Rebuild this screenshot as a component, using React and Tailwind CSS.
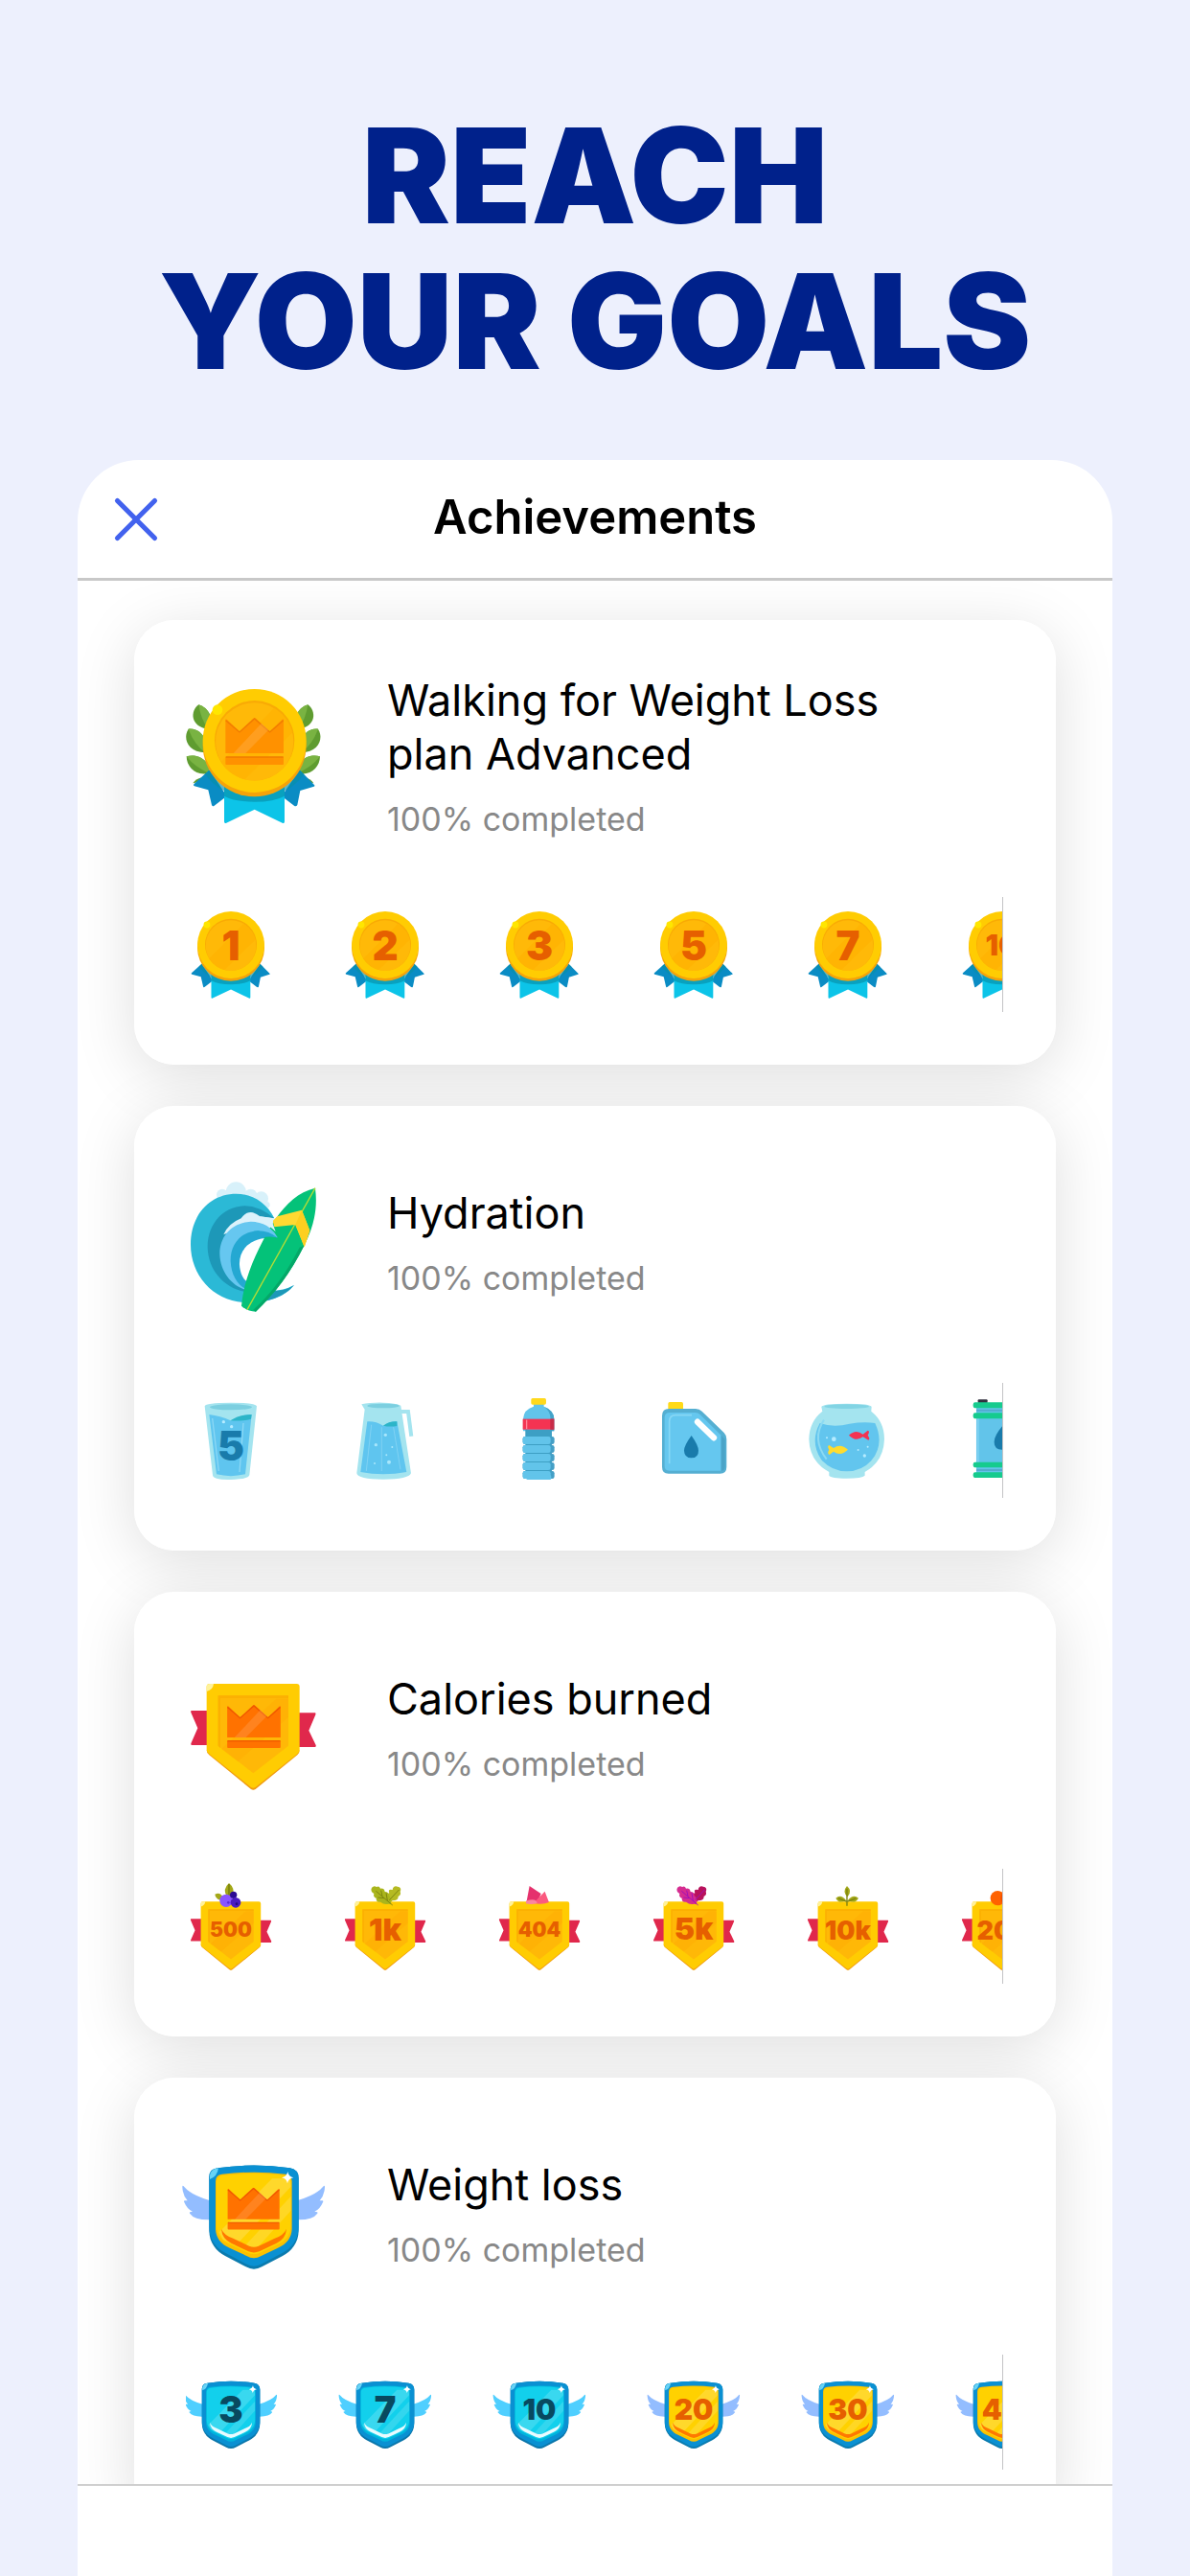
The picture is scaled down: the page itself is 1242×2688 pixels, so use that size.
import { X } from 'lucide-react'

function Label({ y, size, fill, children }) {
  return (
    <text
      x="47"
      y={y}
      fontSize={size}
      fill={fill}
      textAnchor="middle"
      className="font-['Inter',sans-serif] font-black"
    >
      {children}
    </text>
  )
}

function Icon({ label, children }) {
  return (
    <svg viewBox="0 0 150 150" role="img" aria-label={label} className="size-[150px] shrink-0 overflow-visible">
      {children}
    </svg>
  )
}

function Badge({ label, children }) {
  return (
    <svg viewBox="0 0 94 120" role="img" aria-label={label} className="h-[120px] w-[94px] overflow-visible">
      {children}
    </svg>
  )
}

function Crown({ transform, fill, edge }) {
  return (
    <g transform={transform}>
      <path d="M-91 6Q-91 1-86 5L-47 42-6 3Q0-3 6 3L48 42 86 5Q91 1 91 6V110H-91Z" fill={fill} />
      <path d="M-90 7L-47 44 0 2 48 44 90 7" fill="none" stroke={edge} strokeWidth="4" />
      <path d="M22 16L44 37-28 110H-66Z" fill="#fff" opacity=".12" />
      <rect x="-91" y="121" width="182" height="25" rx="3" fill={fill} />
      <path d="M-90 122H90" stroke={edge} strokeWidth="4" />
    </g>
  )
}

/* ---------- medals ---------- */

function Coin() {
  return (
    <>
      <path d="M266 490L217 535Q214 539 219 541L262 553 273 600Q276 607 281 602L320 572Z" fill="#0a8cc4" />
      <path d="M548 490L594 537Q598 540 593 542L550 555 541 600Q537 607 531 602L492 572Z" fill="#0a8cc4" />
      <path d="M312 540V652Q312 659 319 656L407 614 494 656Q501 659 501 652V540Z" fill="#0cc4e8" />
      <path d="M252 503Q275 535 312 556V572Q345 590 407 590T501 572V556Q540 535 562 503L520 470H290Z" fill="#078fa8" opacity=".65" />
      <circle cx="407" cy="412" r="162" fill="#f5a30a" />
      <circle cx="407" cy="399" r="162" fill="#ffcc02" />
      <circle cx="407" cy="398" r="125" fill="#f9aa05" />
      <circle cx="407" cy="402" r="122" fill="#ffb908" />
      <path d="M302 465L468 297Q512 320 527 372L376 520Q325 505 302 465Z" fill="#ffb000" opacity=".6" />
      <circle cx="291" cy="302" r="16" fill="#ffe600" />
    </>
  )
}

function Laurel() {
  return (
    <>
      <g fill="#5f9c30">
        <path d="M232 286C205 305 205 355 262 363C282 330 264 296 232 286Z" />
        <path d="M200 362C182 390 196 434 252 436C264 395 238 358 200 362Z" />
        <path d="M194 448C194 482 226 512 264 500C270 462 230 438 194 448Z" />
        <path d="M214 532Q222 518 242 514L232 528Z" />
      </g>
      <g fill="#79b342">
        <path d="M232 286C264 296 282 330 262 363Q238 330 232 286Z" />
        <path d="M200 362C238 358 264 395 252 436Q216 408 200 362Z" />
        <path d="M194 448C230 438 270 462 264 500Q220 482 194 448Z" />
      </g>
    </>
  )
}

function LaurelMedal() {
  return (
    <Icon label="Gold medal">
      <g transform="translate(-64 -75) scale(.3333)">
        <Laurel />
        <g transform="translate(806 0) scale(-1 1)">
          <Laurel />
        </g>
        <Coin />
        <Crown transform="translate(407 328)" fill="#ff9100" edge="#f07c00" />
      </g>
    </Icon>
  )
}

function CoinBadge({ value }) {
  const small = value.length > 1
  return (
    <Badge label={`${value} medal`}>
      <g transform="translate(-40.9 -36.2) scale(.216)">
        <Coin />
      </g>
      <Label y={small ? 61 : 66} size={small ? 30 : 42} fill="#e65f00">{value}</Label>
    </Badge>
  )
}

/* ---------- hydration ---------- */

function WaveIcon() {
  return (
    <Icon label="Wave and surfboard">
      <g transform="translate(-64 -22) scale(.3333)">
        <g fill="#d8f1fa">
          <circle cx="306" cy="140" r="18" />
          <circle cx="349" cy="132" r="32" />
          <circle cx="395" cy="142" r="20" />
          <circle cx="428" cy="152" r="22" />
          <circle cx="445" cy="172" r="10" />
        </g>
        <path d="M469 214C445 165 400 137 350 137C265 137 207 205 207 296C207 390 275 470 372 477C440 482 500 462 531 423Q490 445 440 440L372 430L310 330L350 220Z" fill="#2bb9d6" />
        <path d="M469 214Q420 174 375 175C305 178 259 235 260 305C262 375 310 430 375 443L400 400L320 340L350 230Z" fill="#1d98b8" />
        <path d="M440 440Q495 447 531 423Q500 460 440 473Z" fill="#1d98b8" />
        <path d="M310 265Q325 230 365 214Q380 192 402 196Q418 202 424 208L470 214L474 250L410 224Z" fill="#dcf2fb" />
        <path d="M475 272Q455 225 395 224C335 228 298 270 298 325C299 380 335 425 378 437L400 400L372 300Z" fill="#66c7f0" />
        <path d="M480 274Q440 248 405 254C355 262 331 305 332 348C334 390 352 420 378 434L420 400L430 290Z" fill="#24a8d2" />
        <path d="M440 276C385 282 358 318 360 360C362 382 368 400 381 410L420 400L450 280Z" fill="#fff" />
        <path d="M597 119C530 135 485 190 447 258C400 345 374 410 366 488Q385 506 411 506C470 450 520 385 562 300C595 235 605 180 597 119Z" fill="#04c279" />
        <path d="M411 506C470 450 520 385 562 300L548 305C510 380 460 450 403 500Z" fill="#04a868" />
        <path d="M597 119L384 500" stroke="#b5dc36" strokeWidth="4" />
        <path d="M478 208L555 188 580 252 563 304 535 234 469 241 464 222Z" fill="#ffd932" />
        <path d="M555 188L580 252 563 304 535 234Z" fill="#fdcf20" />
        <path d="M424 208L466 214 464 230 473 256Q450 232 420 226Z" fill="#dcf2fb" />
        <path d="M425 232Q462 240 479 274L420 262Z" fill="#66c7f0" />
        <path d="M405 254Q445 248 480 275Q455 268 425 276Z" fill="#24a8d2" />
      </g>
    </Icon>
  )
}

function Glass() {
  return (
    <Badge label="5 glasses">
      <g transform="translate(-24 -13) scale(.3333)">
        <path d="M131 112Q133 101 212 101T294 112L271 328Q268 341 212 342T156 328Z" fill="#a4e4ef" />
        <ellipse cx="213" cy="115" rx="66" ry="9" fill="#7ccfe0" />
        <path d="M145 138Q180 142 212 157Q240 140 278 138L258 325Q212 336 168 325Z" fill="#5fc5ef" />
        <path d="M212 157Q240 138 278 138L276 152Q245 160 212 157Z" fill="#2cb5c8" />
        <path d="M155 150L175 315M252 165L240 318" stroke="#8cd8f5" strokeWidth="4" />
        <circle cx="190" cy="161" r="5" fill="#b5ebff" />
        <circle cx="215" cy="176" r="5" fill="#b5ebff" />
      </g>
      <Label y="81" size="42" fill="#197bab">5</Label>
    </Badge>
  )
}

function Pitcher() {
  return (
    <Badge label="Pitcher">
      <g transform="translate(-185 -13) scale(.3333)">
        <path d="M622 106Q650 100 690 101T745 110L777 322Q770 341 690 341T607 322L632 122Z" fill="#a4e4ef" />
        <ellipse cx="690" cy="111" rx="50" ry="7" fill="#7ccfe0" />
        <path d="M742 129H768L778 206" fill="none" stroke="#a4e4ef" strokeWidth="12" />
        <path d="M640 160Q665 158 690 173Q710 160 733 160L763 318Q690 332 619 318Z" fill="#5fc5ef" />
        <path d="M690 173Q710 158 733 160V174Q710 178 690 173Z" fill="#2cb5c8" />
        <path d="M653 170L637 315M685 178V315M722 178L744 310" stroke="#80d2f3" strokeWidth="3" />
        <g fill="#a9e6fb">
          <circle cx="697" cy="202" r="5" />
          <circle cx="667" cy="233" r="5" />
          <circle cx="708" cy="287" r="6" />
          <circle cx="718" cy="240" r="3" />
          <circle cx="663" cy="291" r="3" />
          <circle cx="700" cy="265" r="3" />
        </g>
      </g>
    </Badge>
  )
}

function Bottle() {
  return (
    <Badge label="Bottle">
      <g transform="translate(-346 -13) scale(.3333)">
        <path d="M1161 104H1193V113Q1225 125 1225 152V190H1128V152Q1130 122 1161 113Z" fill="#62c4ea" />
        <path d="M1193 113Q1225 125 1225 152V190H1214V150Q1212 125 1193 113Z" fill="#43a3c9" />
        <rect x="1135" y="186" width="83" height="145" fill="#3d9fc4" />
        {[207, 234, 261, 288, 315].map((y) => (
          <g key={y}>
            <rect x="1127" y={y} width="99" height="24" rx="7" fill="#449fc6" />
            <rect x="1127" y={y} width="87" height="24" rx="7" fill="#62c4ea" />
          </g>
        ))}
        <rect x="1138" y="328" width="78" height="14" rx="4" fill="#62c4ea" />
        <rect x="1127" y="152" width="98" height="33" fill="#f43352" />
        <rect x="1213" y="152" width="12" height="33" fill="#c82c48" />
        <path d="M1139 155V183" stroke="#ff8497" strokeWidth="4" />
        <rect x="1153" y="87" width="47" height="20" rx="5" fill="#ffd91c" />
      </g>
    </Badge>
  )
}

function Canister() {
  return (
    <Badge label="Canister">
      <g transform="translate(-37 -13) scale(.3333)">
        <rect x="172" y="99" width="47" height="26" rx="5" fill="#ffda18" />
        <path d="M153 142Q153 120 175 120H258Q270 120 278 128L347 195Q355 203 355 215V302Q355 323 335 323H173Q153 323 153 302Z" fill="#55afd2" />
        <path d="M161 146Q161 132 178 132H256Q266 132 272 138L338 203V314H176Q161 314 161 300Z" fill="#65c7ef" />
        <path d="M338 203L350 215V302Q350 314 338 314Z" fill="#4ba4c8" />
        <path d="M176 292V160Q176 140 196 140H246" fill="none" stroke="#86d7f5" strokeWidth="5" />
        <path d="M264 161L315 211" stroke="#fff" strokeWidth="19" strokeLinecap="round" />
        <path d="M245 204Q267 235 267 251Q267 274 245 274T222 251Q222 235 245 204Z" fill="#197bab" />
      </g>
    </Badge>
  )
}

function FishBowl() {
  return (
    <Badge label="Fish bowl">
      <g transform="translate(-198 -13) scale(.3333)">
        <path d="M652 114Q655 104 731 104T809 114L808 128Q849 160 849 215Q847 285 788 318V329Q780 338 731 338T676 329V318Q615 285 613 215Q614 160 655 128Z" fill="#a4e4ef" />
        <ellipse cx="731" cy="113" rx="70" ry="7" fill="#82d4e4" />
        <path d="M647 165Q690 180 740 167Q785 160 820 165Q850 230 810 280Q780 316 731 316Q685 316 652 280Q615 225 647 165Z" fill="#62c5ee" />
        <path d="M660 155Q620 215 668 278" fill="none" stroke="#8cdaf2" strokeWidth="6" />
        <path d="M738 203Q760 182 782 200L797 188Q805 190 797 203Q806 214 799 218L782 208Q760 225 738 203Z" fill="#f43352" />
        <path d="M735 248Q712 227 690 243L676 234Q669 238 676 248Q669 260 677 264L690 254Q712 270 735 248Z" fill="#ffdc2e" />
        <g fill="#b5ebff">
          <circle cx="691" cy="215" r="7" />
          <circle cx="787" cy="267" r="5" />
          <circle cx="797" cy="239" r="3" />
          <circle cx="767" cy="249" r="3" />
          <circle cx="669" cy="211" r="3" />
        </g>
      </g>
    </Badge>
  )
}

function Barrel() {
  return (
    <Badge label="Barrel">
      <g transform="translate(-359 -13) scale(.3333)">
        <rect x="1142" y="91" width="30" height="12" rx="3" fill="#32313f" />
        <rect x="1137" y="110" width="160" height="215" fill="#62c4ea" />
        <path d="M1137 125H1297M1137 312H1297" stroke="#52abd0" strokeWidth="6" />
        <path d="M1142 150V290" stroke="#7fd2f2" strokeWidth="6" />
        <g fill="#16cb8e">
          <rect x="1127" y="100" width="180" height="18" rx="7" />
          <rect x="1127" y="133" width="180" height="18" rx="7" />
          <rect x="1127" y="287" width="180" height="17" rx="7" />
          <rect x="1127" y="319" width="180" height="17" rx="7" />
        </g>
        <path d="M1218 175Q1243 205 1243 224Q1243 248 1218 248T1193 224Q1193 205 1218 175Z" fill="#197bab" />
      </g>
    </Badge>
  )
}

/* ---------- calories ---------- */

function Crest() {
  return (
    <>
      <path d="M89 195H140V303H91Q86 303 88 298L109 250 88 201Q86 196 89 195Z" fill="#e0284c" />
      <path d="M477 202H425V309H477Q481 308 479 303L457 257 478 208Q480 203 477 202Z" fill="#e0284c" />
      <path d="M137 319Q137 329 145 334L276 441Q283 446 290 441L421 334Q428 329 428 319Z" fill="#f09a10" />
      <path d="M137 120Q137 111 147 111H419Q428 111 428 120V318Q428 326 421 331L290 435Q283 440 276 435L145 331Q137 326 137 318Z" fill="#ffcc02" />
      <path d="M173 148H393V305L283 391 173 305Z" fill="#ffb807" />
      <path d="M173 148H393V156H180V312L173 305Z" fill="#fcb002" />
      <path d="M184 315L355 158H393V215L235 354Z" fill="#ffad05" opacity=".6" />
      <path d="M137 120Q137 111 147 111H159Q157 130 137 135Z" fill="#fff29a" />
    </>
  )
}

function CrestIcon() {
  return (
    <Icon label="Gold crest">
      <g transform="translate(-24 -9) scale(.3333)">
        <Crest />
        <Crown transform="translate(285 178) scale(.918)" fill="#ff7200" edge="#ee5700" />
      </g>
    </Icon>
  )
}

function Berries() {
  return (
    <g transform="translate(-24 -20) scale(.3333)">
      <path d="M207 105Q228 122 218 146L200 146Q186 124 207 105Z" fill="#a3a818" />
      <path d="M163 140Q180 132 188 150L180 158Q165 154 163 140Z" fill="#a3a818" />
      <path d="M207 108V144" stroke="#737a0c" strokeWidth="4" />
      <circle cx="198" cy="160" r="20" fill="#8a55ff" />
      <circle cx="221" cy="142" r="11" fill="#2c0c93" />
      <circle cx="228" cy="166" r="16" fill="#4a1cc0" />
      <circle cx="205" cy="166" r="4" fill="#5b2bd8" />
      <circle cx="231" cy="170" r="4" fill="#240a80" />
    </g>
  )
}

function OakLeaves({ transform, left, right, vein }) {
  return (
    <g transform={transform}>
      <path d="M44 42Q42 24 56 22Q50 8 66 12Q68-2 82 2Q96 4 90 18Q94 28 84 32Q84 46 66 46Q56 56 44 42Z" fill={right} />
      <path d="M54 56Q40 60 28 50Q14 52 15 38Q4 34 8 24Q-5 16 1 5Q8-3 16 3Q24-2 28 8Q40 6 42 18Q54 18 54 30Q66 40 60 58Z" fill={left} />
      <path d="M14 16L66 60M30 14L34 32M20 36L40 38M46 22L50 46" fill="none" stroke={vein} strokeWidth="3" />
      <path d="M86 12L56 44" stroke={vein} strokeWidth="3" />
    </g>
  )
}

function Melon() {
  return (
    <g transform="translate(-346 -20) scale(.3333)">
      <path d="M1148 114L1184 138 1172 168H1138Z" fill="#e5316d" />
      <path d="M1196 131L1209 165Q1190 174 1160 168Z" fill="#fb5a80" />
      <path d="M1138 160Q1170 150 1172 168Q1155 174 1137 169Z" fill="#fa86a0" />
    </g>
  )
}

function Sprout() {
  return (
    <g transform="translate(-198 -20) scale(.3333)">
      <path d="M732 114Q750 130 734 148Q716 132 732 114Z" fill="#a3a818" />
      <path d="M697 152Q712 138 729 158Q708 172 697 152Z" fill="#a3a818" />
      <path d="M768 152Q752 138 735 158Q756 172 768 152Z" fill="#a3a818" />
      <path d="M732 122V176M705 153L732 163 760 153" fill="none" stroke="#7a8010" strokeWidth="4" />
    </g>
  )
}

function Orange() {
  return (
    <g transform="translate(-359 -20) scale(.3333)">
      <circle cx="1204" cy="152" r="23" fill="#ff6200" />
      <circle cx="1236" cy="152" r="23" fill="#f24f00" />
    </g>
  )
}

function CrestBadge({ value, size, y, children }) {
  return (
    <Badge label={`${value} calories`}>
      <g transform="translate(-13.9 10.4) scale(.2152)">
        <Crest />
      </g>
      {children}
      <Label y={y} size={size} fill="#e65f00">{value}</Label>
    </Badge>
  )
}

/* ---------- weight loss ---------- */

const GOLD = { wing: '#93bdff', rim: '#0a90d2', shade: '#0b7bae', ring: '#fbc000', face: '#ffd100', chevron: '#ff7800', text: '#e65f00' }
const BLUE = { wing: '#4fcfff', rim: '#0a90d2', shade: '#0b76aa', ring: '#00b4dc', face: '#12d0ec', chevron: '#e8fbff', text: '#08495f' }

function Wing({ transform, fill }) {
  return (
    <path
      transform={transform}
      d="M148 229Q85 210 65 184Q61 180 61 187Q62 212 77 229L69 229Q64 229 67 234Q76 256 93 263L85 265Q82 266 85 270Q98 290 148 289Z"
      fill={fill}
    />
  )
}

function Shield({ colors }) {
  return (
    <>
      <Wing fill={colors.wing} />
      <Wing fill={colors.wing} transform="translate(568 0) scale(-1 1)" />
      <path d="M145 155Q145 130 172 127Q285 110 398 127Q425 132 425 158V322C425 362 402 388 375 402L310 436Q285 450 260 436L195 402C168 388 145 362 145 322Z" fill={colors.shade} />
      <path d="M145 155Q145 130 172 127Q285 110 398 127Q425 132 425 158V312C425 352 402 378 375 392L310 427Q285 441 260 427L195 392C168 378 145 352 145 312Z" fill={colors.rim} />
      <path d="M165 168Q165 149 185 146Q285 134 384 146Q404 149 404 168V318C403 345 388 365 360 377L308 402Q285 416 262 402L209 377C181 365 166 345 165 318Z" fill={colors.ring} />
      <path d="M168 171Q168 153 187 150Q285 138 382 150Q401 153 401 171V308C400 335 385 355 357 367L307 391Q285 403 263 391L212 367C184 355 169 335 168 308Z" fill={colors.face} />
      <path d="M342 160H398L401 185 228 370 188 350 176 328Z" fill="#fff" opacity=".17" />
      <path d="M401 215V260L288 385 250 378Z" fill="#fff" opacity=".14" />
      <path d="M183 317Q192 338 220 347L270 371Q285 377 300 371L350 347Q378 338 387 317Q385 348 356 362L302 388Q285 395 268 388L214 362Q185 348 183 317Z" fill={colors.chevron} />
      <path d="M147 150Q150 130 174 127Q170 155 147 162Z" fill="#68d3f5" />
      <path d="M391 138Q393 154 409 157Q393 160 390 175Q387 159 372 157Q388 154 391 138Z" fill="#fff" />
    </>
  )
}

function ShieldIcon() {
  return (
    <Icon label="Winged shield">
      <g transform="translate(-24 -16) scale(.3333)">
        <Shield colors={GOLD} />
        <Crown transform="translate(284 189) scale(.892)" fill="#ff7200" edge="#ee5700" />
      </g>
    </Icon>
  )
}

function ShieldBadge({ value, colors }) {
  const small = value.length > 1
  return (
    <Badge label={`${value} shield`}>
      <g transform="translate(-14.6 2.2) scale(.2163)">
        <Shield colors={colors} />
      </g>
      <Label y={small ? 68 : 71} size={small ? 30 : 38} fill={colors.text}>{value}</Label>
    </Badge>
  )
}

/* ---------- page ---------- */

const ACHIEVEMENTS = [
  {
    title: 'Walking for Weight Loss plan Advanced',
    icon: <LaurelMedal />,
    badges: ['1', '2', '3', '5', '7', '10'].map((value) => <CoinBadge value={value} />),
  },
  {
    title: 'Hydration',
    icon: <WaveIcon />,
    badges: [<Glass />, <Pitcher />, <Bottle />, <Canister />, <FishBowl />, <Barrel />],
  },
  {
    title: 'Calories burned',
    icon: <CrestIcon />,
    badges: [
      <CrestBadge value="500" size={21} y={71}><Berries /></CrestBadge>,
      <CrestBadge value="1k" size={32} y={75}>
        <OakLeaves transform="translate(32.7 18) scale(.3333)" left="#a9b51c" right="#b5ba22" vein="#7d8510" />
      </CrestBadge>,
      <CrestBadge value="404" size={21} y={71}><Melon /></CrestBadge>,
      <CrestBadge value="5k" size={32} y={74}>
        <OakLeaves transform="translate(29.7 18) scale(.3333)" left="#d52c90" right="#b8125c" vein="#a010b8" />
      </CrestBadge>,
      <CrestBadge value="10k" size={27} y={74}><Sprout /></CrestBadge>,
      <CrestBadge value="20k" size={27} y={74}><Orange /></CrestBadge>,
    ],
  },
  {
    title: 'Weight loss',
    icon: <ShieldIcon />,
    badges: [
      <ShieldBadge value="3" colors={BLUE} />,
      <ShieldBadge value="7" colors={BLUE} />,
      <ShieldBadge value="10" colors={BLUE} />,
      <ShieldBadge value="20" colors={GOLD} />,
      <ShieldBadge value="30" colors={GOLD} />,
      <ShieldBadge value="40" colors={GOLD} />,
    ],
  },
]

function AchievementCard({ title, icon, badges }) {
  return (
    <article className="relative shrink-0 rounded-[42px] bg-white py-[55px] pr-[55px] pl-[54px] before:absolute before:inset-0 before:-z-10 before:rounded-[42px] before:shadow-[0_12px_64px_rgba(0,0,0,0.13)]">
      <div className="flex h-44 items-center gap-[60px]">
        {icon}
        <div>
          <h2 className="max-w-[560px] text-[45px] leading-[56px] text-black">{title}</h2>
          <p className="mt-[18px] text-[34px] leading-[44px] text-[#888]">100% completed</p>
        </div>
      </div>
      <ul className="mt-[58px] flex gap-[67px] overflow-hidden border-r border-[#c4c4c6]">
        {badges.map((badge, i) => (
          <li key={i} className="shrink-0">{badge}</li>
        ))}
      </ul>
    </article>
  )
}

export default function App() {
  return (
    <div className="flex h-screen flex-col bg-[#edf0fd] px-[81px] font-['Inter',sans-serif]">
      <h1 className="-mx-10 pt-[107px] pb-[69px] text-center text-[138px] leading-[152px] font-black text-[#00218b]">
        REACH
        <br />
        YOUR GOALS
      </h1>

      <main className="flex min-h-0 flex-1 flex-col overflow-hidden rounded-t-[64px] bg-white">
        <header className="grid h-[126px] shrink-0 grid-cols-[1fr_auto_1fr] items-center border-b-3 border-[#c8c8c8] px-[22px]">
          <button type="button" aria-label="Close" className="w-fit text-[#4262ee]">
            <X size={78} strokeWidth={1.6} />
          </button>
          <h2 className="pb-1 text-[49px] leading-[60px] font-semibold text-black">Achievements</h2>
        </header>

        <div className="isolate flex min-h-0 flex-1 flex-col gap-[43px] overflow-hidden px-[59px] pt-[41px]">
          {ACHIEVEMENTS.map((item) => (
            <AchievementCard key={item.title} {...item} />
          ))}
        </div>

        <footer className="h-24 shrink-0 border-t-2 border-[#cfcfcf]" />
      </main>
    </div>
  )
}
